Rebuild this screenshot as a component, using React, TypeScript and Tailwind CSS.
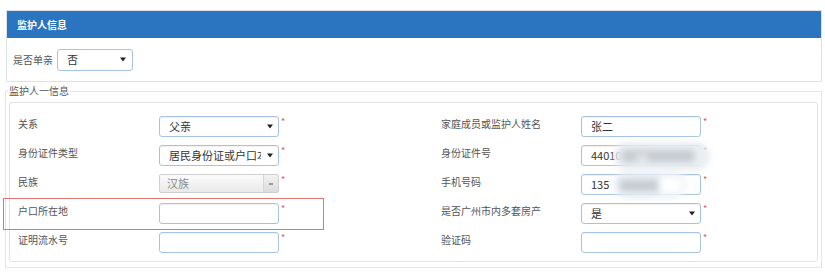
import React from 'react';

const font = { fontFamily: '"Noto Sans CJK SC", "Noto Sans", sans-serif' };

type BoxProps = {
  value?: string;
  select?: boolean;
  disabled?: boolean;
  blur?: 'id' | 'phone';
};

const Star = () => (
  <span className="ml-[2px] mt-[1px] text-[9px] leading-none text-[#e25555]">*</span>
);

const Caret = () => (
  <svg width="6" height="5" viewBox="0 0 6 5" className="shrink-0">
    <path d="M0 0.5 L6 0.5 L3 4.5 Z" fill="#222" />
  </svg>
);

const Control = ({ value, select, disabled, blur }: BoxProps) => {
  if (disabled) {
    return (
      <div className="flex h-[19px] w-[120px] items-stretch overflow-hidden rounded-[2px] border border-[#cfcfcf] bg-gradient-to-b from-[#fbfbfb] to-[#e9e9e9]">
        <span className="flex flex-1 items-center pl-[7px] text-[11px] text-[#8a8a8a]">{value}</span>
        <span className="flex w-[15px] items-center justify-center border-l border-[#d6d6d6] bg-gradient-to-b from-[#f2f2f2] to-[#dcdcdc]">
          <span className="block h-[2px] w-[4px] bg-[#999]" />
        </span>
      </div>
    );
  }
  return (
    <div className="relative flex h-[21px] w-[120px] items-center rounded-[3px] border border-[#a6c4e2] bg-white pl-[9px] pr-[5px] shadow-[inset_0_1px_1px_rgba(0,0,0,0.06)]">
      <span className="mr-[6px] flex-1 overflow-hidden whitespace-nowrap text-[11px] text-[#333]">{value}</span>
      {select && <Caret />}
      {blur === 'id' && (
        <div className="absolute left-[32px] top-[-4px] h-[28px] w-[96px] rounded-full bg-[#e9eef3] blur-[3px]">
          <div className="absolute left-[8px] top-[8px] h-[12px] w-[72px] bg-[#c6cbd1]" />
          <div className="absolute left-[22px] top-[13px] h-[6px] w-[12px] bg-[#e6e9ed]" />
        </div>
      )}
      {blur === 'phone' && (
        <div className="absolute left-[32px] top-[-3px] h-[26px] w-[72px] rounded-full bg-[#e9eef3] blur-[3px]">
          <div className="absolute left-[6px] top-[8px] h-[11px] w-[38px] bg-[#c6cbd1]" />
          <div className="absolute left-[46px] top-[5px] h-[16px] w-[22px] bg-white" />
        </div>
      )}
    </div>
  );
};

type Field = { label: string } & BoxProps;

const rows: [Field, Field][] = [
  [
    { label: '关系', value: '父亲', select: true },
    { label: '家庭成员或监护人姓名', value: '张二' },
  ],
  [
    { label: '身份证件类型', value: '居民身份证或户口本', select: true },
    { label: '身份证件号', value: '44010', blur: 'id' },
  ],
  [
    { label: '民族', value: '汉族', disabled: true },
    { label: '手机号码', value: '135', blur: 'phone' },
  ],
  [
    { label: '户口所在地' },
    { label: '是否广州市内多套房产', value: '是', select: true },
  ],
  [{ label: '证明流水号' }, { label: '验证码' }],
];

const Cell = ({ f, labelW, w }: { f: Field; labelW: string; w: string }) => (
  <div className={`flex items-start ${w}`}>
    <span className={`${labelW} shrink-0 pt-[2px] text-[10px] leading-[12px] text-[#555]`}>{f.label}</span>
    <Control {...f} />
    <Star />
  </div>
);

export default function App() {
  return (
    <div className="relative h-[272px] w-[825px] overflow-hidden bg-white pt-[10px]" style={font}>
      {/* 监护人信息 panel */}
      <div className="ml-[6px] w-[816px] border border-[#dde2e8]">
        <div className="flex h-[27px] items-center bg-[#2a74c0] pl-[10px] text-[10px] font-bold text-white">
          监护人信息
        </div>
        <div className="flex h-[43px] items-center gap-[4px] pl-[6px]">
          <span className="text-[10px] text-[#555]">是否单亲</span>
          <div className="flex h-[22px] w-[76px] items-center justify-between rounded-[3px] border border-[#a6c4e2] pl-[9px] pr-[6px]">
            <span className="text-[11px] text-[#333]">否</span>
            <Caret />
          </div>
        </div>
      </div>

      {/* 监护人一信息 */}
      <fieldset className="ml-[5px] mt-[2px] w-[817px] border border-[#e4e4e4] px-[3px] pb-[5px]">
        <legend className="text-[10px] leading-[14px] text-[#555]">监护人一信息</legend>
        <div className="mt-[4px] flex flex-col gap-[8px] rounded-[3px] border border-[#e2e2e2] pb-[8px] pl-[8px] pt-[13px]">
          {rows.map(([l, r], i) => (
            <div key={i} className="flex">
              <Cell f={l} labelW="w-[141px]" w="w-[423px]" />
              <Cell f={r} labelW="w-[140px]" w="" />
            </div>
          ))}
        </div>
      </fieldset>

      {/* red annotation box */}
      <div className="absolute left-[3px] top-[198px] h-[32px] w-[321px] border border-[#e07474]" />
    </div>
  );
}
